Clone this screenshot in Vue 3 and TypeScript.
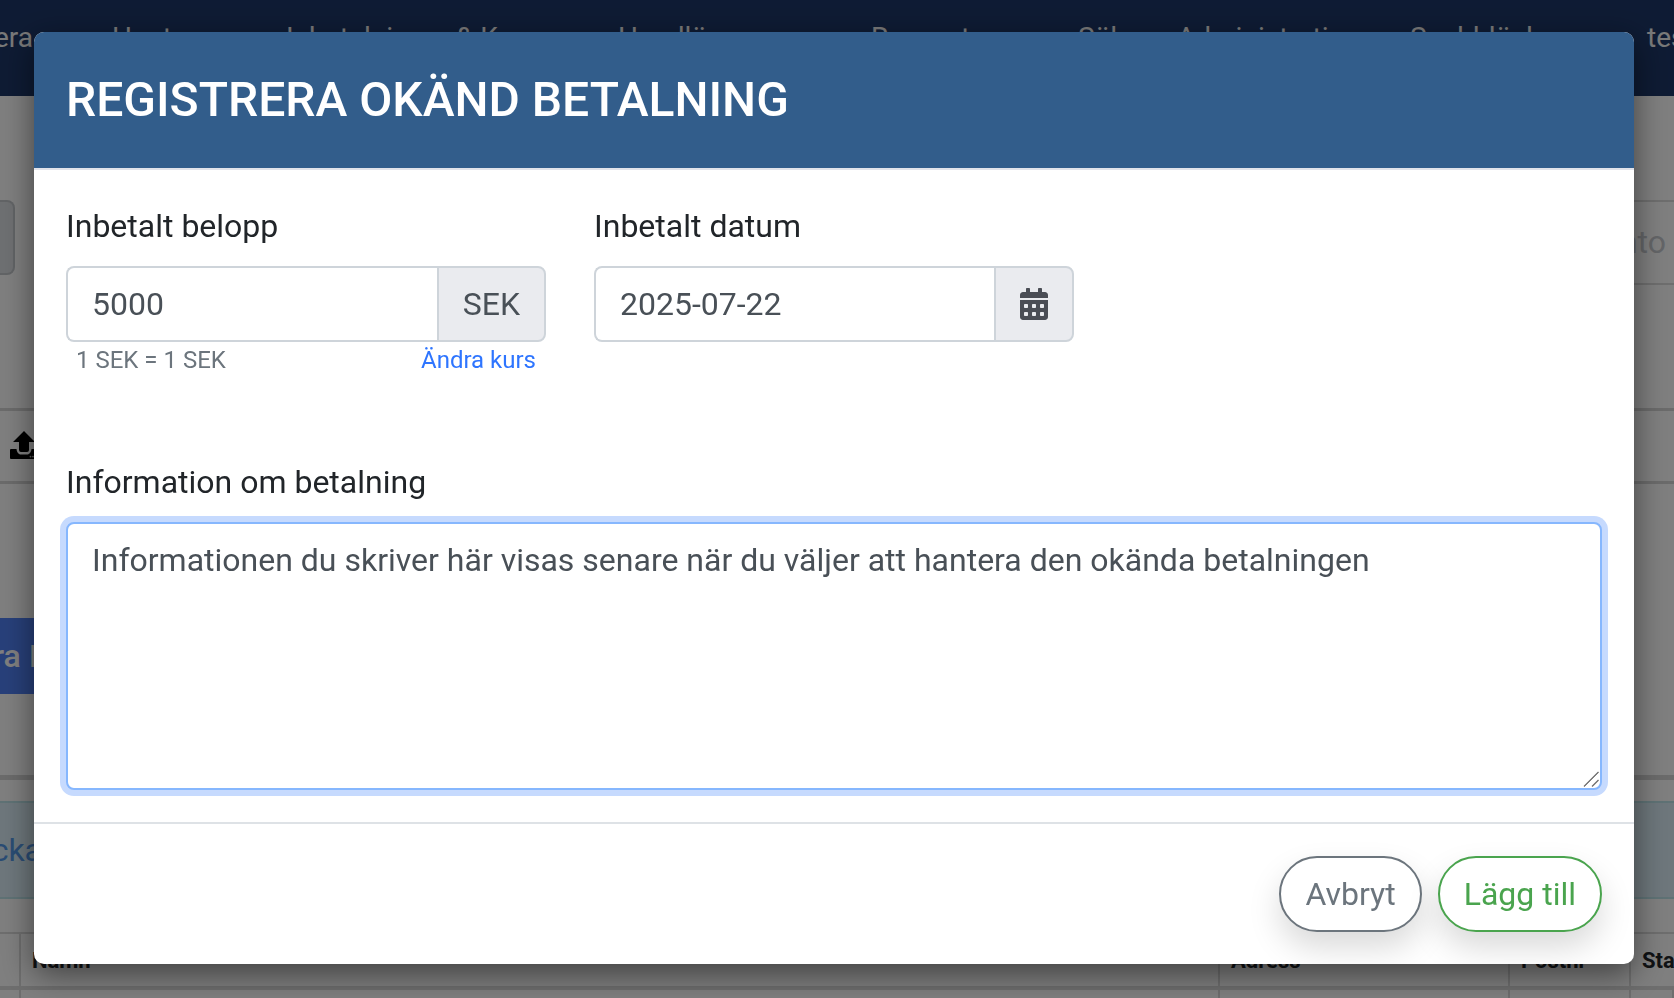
<script setup lang="ts">
const navItems: string[] = [
  'Fakturera',
  'Hantera',
  'Inbetalningar & Kassa',
  'Handläggare',
  'Rapporter',
  'Sök',
  'Administration',
  'Snabblänkar',
  'test',
]
const columns: string[] = ['Namn', 'Adress', 'Postnr', 'Status']
const amount = '5000'
const paidDate = '2025-07-22'
const note = 'Informationen du skriver här visas senare när du väljer att hantera den okända betalningen'
</script>

<template>
  <div class="page">
    <nav class="nav">
      <span v-for="item in navItems" :key="item" class="nav-item">{{ item }}</span>
    </nav>

    <main class="content">
      <section class="tools">
        <div class="tool-box"></div>
        <span class="tool-label">Konto</span>
      </section>

      <section class="upload-row">
        <svg class="upload-icon" viewBox="0 0 30 28" aria-hidden="true">
          <path d="M14 0 L25 11 H19 V19 a2 2 0 0 1-2 2 H11 a2 2 0 0 1-2-2 V11 H3 Z" fill="#000" />
          <path d="M1 18 H6.5 C7 22 9 23.5 11 23.5 H17 C19 23.5 21 22 21.5 18 H29 a1 1 0 0 1 1 1 V27 a1 1 0 0 1-1 1 H1 a1 1 0 0 1-1-1 V19 a1 1 0 0 1 1-1 Z" fill="#000" />
          <circle cx="20.5" cy="25.6" r="0.9" fill="#bbb" />
          <circle cx="23" cy="25.6" r="0.9" fill="#bbb" />
        </svg>
      </section>

      <section class="action-row">
        <span class="action-btn">Registrera Inbetalning</span>
      </section>

      <hr class="divider" />

      <section class="alert">
        <span class="alert-text">Klicka</span>
      </section>

      <div class="table-head">
        <span class="th th-gutter"></span>
        <span v-for="col in columns" :key="col" class="th">{{ col }}</span>
      </div>
      <div class="table-row">
        <span class="td"></span>
        <span v-for="col in columns" :key="col" class="td"></span>
      </div>
    </main>

    <div class="backdrop">
      <div class="modal">
        <header class="modal-header">
          <h4 class="modal-title">REGISTRERA OKÄND BETALNING</h4>
        </header>

        <div class="modal-body">
          <div class="fields">
            <div class="field">
              <label class="label">Inbetalt belopp</label>
              <div class="input-group">
                <input class="control" type="text" :value="amount" />
                <span class="addon addon-text">SEK</span>
              </div>
              <div class="rate">
                <span class="rate-text">1 SEK = 1 SEK</span>
                <a class="rate-link">Ändra kurs</a>
              </div>
            </div>

            <div class="field">
              <label class="label">Inbetalt datum</label>
              <div class="input-group">
                <input class="control" type="text" :value="paidDate" />
                <span class="addon addon-icon">
                  <svg class="calendar" viewBox="0 0 448 512" aria-hidden="true">
                    <path fill="#4a4d55" d="M0 464c0 26.5 21.5 48 48 48h352c26.5 0 48-21.5 48-48V192H0v272zm320-196c0-6.6 5.4-12 12-12h40c6.6 0 12 5.4 12 12v40c0 6.6-5.4 12-12 12h-40c-6.6 0-12-5.4-12-12v-40zm0 128c0-6.6 5.4-12 12-12h40c6.6 0 12 5.4 12 12v40c0 6.6-5.4 12-12 12h-40c-6.6 0-12-5.4-12-12v-40zM192 268c0-6.6 5.4-12 12-12h40c6.6 0 12 5.4 12 12v40c0 6.6-5.4 12-12 12h-40c-6.6 0-12-5.4-12-12v-40zm0 128c0-6.6 5.4-12 12-12h40c6.6 0 12 5.4 12 12v40c0 6.6-5.4 12-12 12h-40c-6.6 0-12-5.4-12-12v-40zM64 268c0-6.6 5.4-12 12-12h40c6.6 0 12 5.4 12 12v40c0 6.6-5.4 12-12 12H76c-6.6 0-12-5.4-12-12v-40zm0 128c0-6.6 5.4-12 12-12h40c6.6 0 12 5.4 12 12v40c0 6.6-5.4 12-12 12H76c-6.6 0-12-5.4-12-12v-40zM400 64h-48V16c0-8.8-7.2-16-16-16h-32c-8.8 0-16 7.2-16 16v48H160V16c0-8.8-7.2-16-16-16h-32c-8.8 0-16 7.2-16 16v48H48C21.5 64 0 85.5 0 112v48h448v-48c0-26.5-21.5-48-48-48z" />
                  </svg>
                </span>
              </div>
            </div>
          </div>

          <div class="info">
            <label class="label">Information om betalning</label>
            <div class="textarea-wrap">
              <textarea class="textarea" :value="note"></textarea>
              <svg class="grip" viewBox="0 0 16 16" aria-hidden="true">
                <path d="M1 15.5 L15.5 1" stroke="#6a6a6a" stroke-width="1.3" />
                <path d="M2.2 16 L16 2.2" stroke="#fff" stroke-width="1" />
                <path d="M9 15.5 L15.5 9" stroke="#6a6a6a" stroke-width="1.3" />
              </svg>
            </div>
          </div>
        </div>

        <footer class="modal-footer">
          <button class="btn btn-cancel" type="button">Avbryt</button>
          <button class="btn btn-add" type="button">Lägg till</button>
        </footer>
      </div>
    </div>
  </div>
</template>

<style>
html, body {
  margin: 0;
  background: #fff;
  overflow: hidden;
}
</style>

<style scoped>
.page {
  width: 1674px;
  height: 998px;
  overflow: hidden;
  position: relative;
  font-family: Roboto, "Liberation Sans", sans-serif;
  background: #fff;
}

/* background page */
.nav {
  height: 96px;
  background: #1d3768;
  display: grid;
  grid-template-columns: 112px 174px 332px 253px 207px 99px 233px 237px 1fr;
  box-sizing: border-box;
  padding-top: 21px;
  overflow: hidden;
}
.nav-item {
  font-size: 28px;
  line-height: 34px;
  color: #f2f2f2;
  white-space: nowrap;
}
.nav-item:first-child {
  text-align: right;
  padding-right: 79px;
  direction: rtl;
}
.content {
  display: flex;
  flex-direction: column;
}
.tools {
  margin-top: 104px;
  height: 85px;
  display: flex;
  justify-content: space-between;
  align-items: flex-start;
}
.tool-box {
  width: 15px;
  height: 75px;
  box-sizing: border-box;
  background: #dde0e4;
  border: 2px solid #c4c8cc;
  border-left: 0;
  border-radius: 0 8px 8px 0;
}
.tool-label {
  width: 300px;
  height: 85px;
  box-sizing: border-box;
  border-top: 2px solid #dcdcdc;
  border-bottom: 2px solid #dcdcdc;
  font-size: 32px;
  line-height: 81px;
  text-align: right;
  color: #c8cbd0;
  padding-right: 8px;
}
.upload-row {
  margin-top: 123px;
  height: 76px;
  box-sizing: border-box;
  border-top: 3px solid #d6d6d6;
  border-bottom: 3px solid #d6d6d6;
  display: flex;
  align-items: center;
  padding-left: 10px;
}
.upload-icon {
  width: 30px;
  height: 28px;
  margin-top: -2px;
}
.action-row {
  margin-top: 134px;
  height: 76px;
  display: flex;
  overflow: hidden;
}
.action-btn {
  background: #5080f4;
  color: #fff;
  font-size: 32px;
  font-weight: 500;
  line-height: 76px;
  white-space: nowrap;
  text-indent: -126px;
  width: 300px;
  box-sizing: border-box;
}
.divider {
  margin: 81px 0 0;
  height: 5px;
  border: 0;
  background: #d6d6d6;
}
.alert {
  margin-top: 21px;
  height: 98px;
  box-sizing: border-box;
  background: #dceff8;
  border-top: 2px solid #bee5eb;
  border-bottom: 2px solid #bee5eb;
  font-size: 32px;
  line-height: 94px;
  overflow: hidden;
}
.alert-text {
  color: #5499e8;
  margin-left: -44px;
}
.table-head,
.table-row {
  display: grid;
  grid-template-columns: 21px 1199px 290px 121px 1fr;
}
.table-head {
  margin-top: 33px;
  height: 54px;
  box-sizing: border-box;
  border-top: 2px solid #dcdcdc;
  border-bottom: 0;
}
.table-row {
  height: 60px;
  border-top: 4px solid #dcdcdc;
}
.th {
  font-size: 22px;
  font-weight: 700;
  color: #212529;
  line-height: 26px;
  padding: 14px 0 0 11px;
  border-right: 2px solid #dcdcdc;
}
.th-gutter {
  padding: 0;
}
.td {
  border-right: 2px solid #dcdcdc;
}

/* dialog */
.backdrop {
  position: fixed;
  inset: 0;
  background: rgba(0, 0, 0, 0.5);
}
.modal {
  position: absolute;
  left: 34px;
  top: 32px;
  width: 1600px;
  height: 932px;
  display: flex;
  flex-direction: column;
  background: #fff;
  border-radius: 10px;
  overflow: hidden;
  box-shadow: 0 10px 32px rgba(0, 0, 0, 0.5);
}
.modal-header {
  height: 138px;
  box-sizing: border-box;
  background: #325d8b;
  border-bottom: 2px solid #e2e3ea;
  display: flex;
  align-items: center;
  padding-left: 32px;
}
.modal-title {
  margin: 0;
  color: #fff;
  font-size: 48px;
  font-weight: 500;
  line-height: 1.2;
}
.modal-body {
  flex: 1;
  padding: 32px 32px 30px;
  display: flex;
  flex-direction: column;
}
.fields {
  display: grid;
  grid-template-columns: 480px 480px;
  gap: 48px;
}
.label {
  display: block;
  font-size: 32px;
  line-height: 48px;
  color: #212529;
  margin-bottom: 16px;
}
.input-group {
  display: flex;
  height: 76px;
}
.control {
  flex: 1;
  min-width: 0;
  box-sizing: border-box;
  height: 76px;
  padding: 12px 24px;
  border: 2px solid #ced4da;
  border-right: 0;
  border-radius: 8px 0 0 8px;
  font-family: inherit;
  font-size: 32px;
  color: #495057;
  outline: none;
  background: #fff;
}
.addon {
  box-sizing: border-box;
  display: flex;
  align-items: center;
  justify-content: center;
  height: 76px;
  background: #eaebef;
  border: 2px solid #ced4da;
  border-radius: 0 8px 8px 0;
  color: #495057;
  font-size: 32px;
}
.addon-text {
  width: 109px;
}
.addon-icon {
  width: 80px;
}
.calendar {
  width: 28px;
  height: 32px;
}
.rate {
  display: flex;
  justify-content: space-between;
  padding: 0 10px;
  font-size: 24px;
  line-height: 36px;
}
.rate-text {
  color: #6c757d;
}
.rate-link {
  color: #2e75ff;
}
.info {
  margin-top: 80px;
}
.textarea-wrap {
  position: relative;
  width: 1536px;
}
.textarea {
  display: block;
  box-sizing: border-box;
  width: 1536px;
  height: 268px;
  padding: 12px 24px;
  border: 2px solid #86b7fe;
  border-radius: 8px;
  box-shadow: 0 0 0 6px #c6dafe;
  font-family: inherit;
  font-size: 32px;
  line-height: 48px;
  color: #495057;
  outline: none;
  resize: none;
}
.grip {
  position: absolute;
  right: 3px;
  bottom: 3px;
  width: 16px;
  height: 16px;
}
.modal-footer {
  height: 142px;
  box-sizing: border-box;
  border-top: 2px solid #dee2e6;
  display: flex;
  justify-content: flex-end;
  align-items: flex-start;
  gap: 16px;
  padding: 32px 32px 0;
}
.btn {
  height: 76px;
  box-sizing: border-box;
  padding: 0 24px;
  background: #fff;
  border: 2px solid;
  border-radius: 38px;
  font-family: inherit;
  font-size: 32px;
  box-shadow: 0 16px 32px rgba(0, 0, 0, 0.15);
}
.btn-cancel {
  color: #6c757d;
  border-color: #6c757d;
}
.btn-add {
  color: #4aa44e;
  border-color: #4aa44e;
}
</style>
